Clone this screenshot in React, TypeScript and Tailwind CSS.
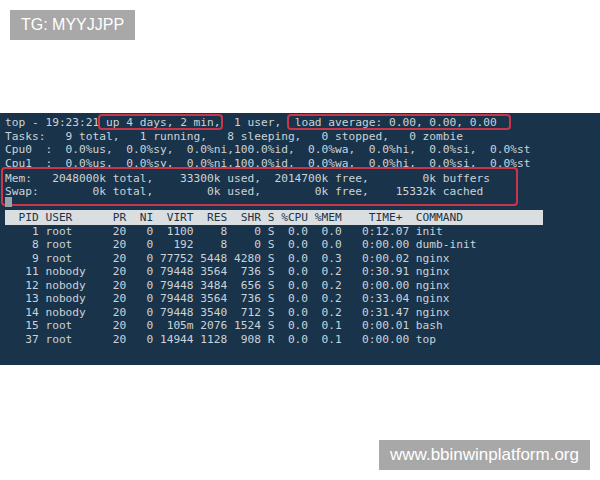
import React from 'react'

const mono = { fontFamily: '"DejaVu Sans Mono", "Liberation Mono", monospace' }

type Proc = [string, string, string, string, string, string, string, string, string, string]

const procs: Proc[] = [
  ['1', 'root', '1100', '8', '0', 'S', '0.0', '0.0', '0:12.07', 'init'],
  ['8', 'root', '192', '8', '0', 'S', '0.0', '0.0', '0:00.00', 'dumb-init'],
  ['9', 'root', '77752', '5448', '4280', 'S', '0.0', '0.3', '0:00.02', 'nginx'],
  ['11', 'nobody', '79448', '3564', '736', 'S', '0.0', '0.2', '0:30.91', 'nginx'],
  ['12', 'nobody', '79448', '3484', '656', 'S', '0.0', '0.2', '0:00.00', 'nginx'],
  ['13', 'nobody', '79448', '3564', '736', 'S', '0.0', '0.2', '0:33.04', 'nginx'],
  ['14', 'nobody', '79448', '3540', '712', 'S', '0.0', '0.2', '0:31.47', 'nginx'],
  ['15', 'root', '105m', '2076', '1524', 'S', '0.0', '0.1', '0:00.01', 'bash'],
  ['37', 'root', '14944', '1128', '908', 'R', '0.0', '0.1', '0:00.00', 'top'],
]

function formatRow([pid, user, virt, res, shr, s, cpu, mem, time, cmd]: Proc) {
  return (
    pid.padStart(5) +
    ' ' +
    user.padEnd(8) +
    '  20   0 ' +
    virt.padStart(5) +
    ' ' +
    res.padStart(4) +
    ' ' +
    shr.padStart(4) +
    ' ' +
    s +
    ' ' +
    cpu.padStart(4) +
    ' ' +
    mem.padStart(4) +
    ' ' +
    time.padStart(9) +
    ' ' +
    cmd
  )
}

const cpuLine = (n: number) =>
  `Cpu${n}  :  0.0%us,  0.0%sy,  0.0%ni,100.0%id,  0.0%wa,  0.0%hi,  0.0%si,  0.0%st`

function Boxed({ children, left, right }: { children: React.ReactNode; left: string; right: string }) {
  return (
    <span className="relative">
      {children}
      <span
        className={`absolute -top-[2px] -bottom-[1px] rounded-[4px] border-2 border-[#c8364c] ${left} ${right}`}
      />
    </span>
  )
}

export default function App() {
  return (
    <div className="flex h-[480px] w-[600px] flex-col bg-white">
      {/* watermark top */}
      <div className="h-[113px] p-[10px]">
        <div
          className="flex h-[30px] w-[125px] items-center justify-center bg-[#a8a8a8] text-[16px] text-white"
          style={{ fontFamily: '"Liberation Sans", Arial, sans-serif' }}
        >
          TG: MYYJJPP
        </div>
      </div>

      {/* terminal */}
      <div
        className="h-[252px] overflow-hidden bg-[#19344a] pl-[5px] pt-[3px] text-[11.2px] leading-[13.6px] text-[#cbd2d8]"
        style={mono}
      >
        <div className="whitespace-pre">
          {'top - 19:23:21 '}
          <Boxed left="-left-[8px]" right="-right-[2px]">up 4 days, 2 min,</Boxed>
          {'  1 user,  '}
          <Boxed left="-left-[8px]" right="-right-[14px]">load average: 0.00, 0.00, 0.00</Boxed>
        </div>
        <div className="whitespace-pre">
          {'Tasks:   9 total,   1 running,   8 sleeping,   0 stopped,   0 zombie'}
        </div>
        <div className="whitespace-pre">{cpuLine(0)}</div>
        <div className="h-[10px] overflow-hidden whitespace-pre">{cpuLine(1)}</div>

        <div className="relative -ml-[4px] w-[517px] rounded-[4px] border-2 border-[#c8364c] pb-[5px] pl-[2px] pt-[3px]">
          <div className="whitespace-pre">
            {'Mem:   2048000k total,    33300k used,  2014700k free,        0k buffers'}
          </div>
          <div className="whitespace-pre">
            {'Swap:        0k total,        0k used,        0k free,    15332k cached'}
          </div>
          <div className="absolute -bottom-[3px] left-[2px] h-[10px] w-[7px] bg-[#9aa3ab]" />
        </div>

        <div className="mt-[4px] h-[15px] w-[538px] whitespace-pre bg-[#dadee1] leading-[15px] text-[#1c3448]">
          {'  PID USER      PR  NI  VIRT  RES  SHR S %CPU %MEM    TIME+  COMMAND'}
        </div>
        {procs.map((p) => (
          <div key={p[0]} className="whitespace-pre leading-[13.5px]">
            {formatRow(p)}
          </div>
        ))}
      </div>

      {/* watermark bottom */}
      <div className="flex h-[115px] justify-end pr-[10px] pt-[75px]">
        <div
          className="flex h-[30px] w-[211px] items-center justify-center bg-[#a8a8a8] text-[17px] text-white"
          style={{ fontFamily: '"Liberation Sans", Arial, sans-serif' }}
        >
          www.bbinwinplatform.org
        </div>
      </div>
    </div>
  )
}
